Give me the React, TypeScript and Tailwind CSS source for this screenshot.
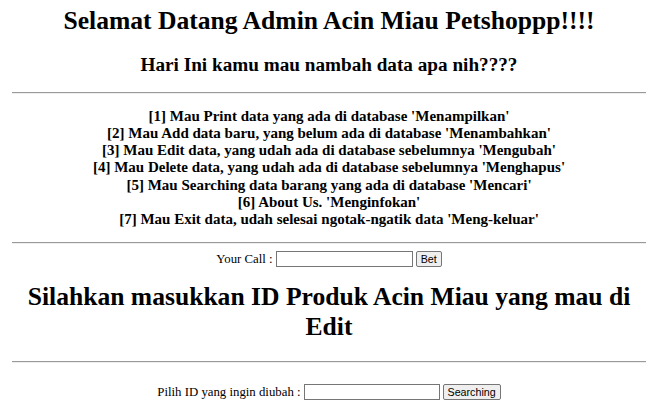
import React from "react"

const MENU = [
  "[1] Mau Print data yang ada di database 'Menampilkan'",
  "[2] Mau Add data baru, yang belum ada di database 'Menambahkan'",
  "[3] Mau Edit data, yang udah ada di database sebelumnya 'Mengubah'",
  "[4] Mau Delete data, yang udah ada di database sebelumnya 'Menghapus'",
  "[5] Mau Searching data barang yang ada di database 'Mencari'",
  "[6] About Us. 'Menginfokan'",
  "[7] Mau Exit data, udah selesai ngotak-ngatik data 'Meng-keluar'",
]

function Rule({ className = "" }: { className?: string }) {
  return <hr className={`h-0 border-t border-b border-t-[#9a9a9a] border-b-[#eeeeee] ${className}`} />
}

function Field({ label, button, inputClass }: { label: string; button: string; inputClass: string }) {
  return (
    <div className="flex items-center justify-center text-[12.8px]">
      <span>{label}</span>
      <input
        type="text"
        className={`ml-[3px] h-[16px] border border-[#767676] bg-white outline-none ${inputClass}`}
      />
      <button className="ml-[3px] h-[16px] px-[4px] border border-[#767676] rounded-[2px] bg-[#efefef] font-['Liberation_Sans',sans-serif] text-[10.7px] leading-none text-black">
        {button}
      </button>
    </div>
  )
}

export default function App() {
  return (
    <div className="min-h-screen bg-white text-black font-['Liberation_Serif',serif] leading-[1.15] pl-[12px] pr-[14px]">
      {/* Header */}
      <h1 className="pt-[6px] text-center text-[25.6px] font-bold">
        Selamat Datang Admin Acin Miau Petshoppp!!!!
      </h1>
      <h2 className="mt-[19px] text-center text-[19.2px] font-bold">Hari Ini kamu mau nambah data apa nih????</h2>
      <Rule className="mt-[15px]" />

      {/* Menu */}
      <h3 className="mt-[14px] text-center text-[15px] font-bold">
        {MENU.map((line) => (
          <div key={line}>{line}</div>
        ))}
      </h3>
      <Rule className="mt-[14px]" />

      <div className="mt-[7px]">
        <Field label="Your Call :" button="Bet" inputClass="w-[137px]" />
      </div>

      {/* Edit section */}
      <h1 className="mt-[15px] text-center text-[25.6px] font-bold">
        Silahkan masukkan ID Produk Acin Miau yang mau di Edit
      </h1>
      <Rule className="mt-[20px]" />

      <div className="mt-[21px]">
        <Field label="Pilih ID yang ingin diubah :" button="Searching" inputClass="w-[136px]" />
      </div>
    </div>
  )
}
